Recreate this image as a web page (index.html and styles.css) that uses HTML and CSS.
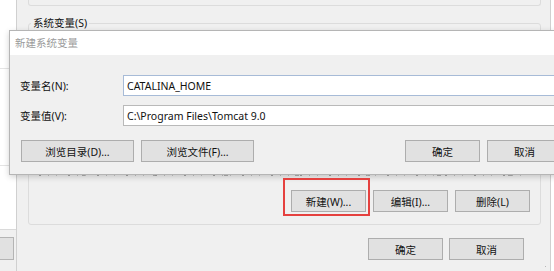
FILE: index.html
```html
<!DOCTYPE html>
<html lang="zh-CN">
<head>
    <meta charset="UTF-8">
    <title>新建系统变量</title>
    <link rel="stylesheet" href="styles.css">
</head>
<body>
<div class="screen">
    <!-- window behind, left edge -->
    <div class="side">
        <div class="side-list">
            <div class="side-row first"></div>
            <div class="side-row second"></div>
        </div>
        <div class="side-foot">
            <div class="side-btn"></div>
        </div>
    </div>

    <!-- environment variables window -->
    <div class="envwin">
        <div class="group-top"></div>
        <fieldset class="group-sys">
            <legend>系统变量(S)</legend>
            <div class="group-inner">
                <!-- list is hidden under the dialog, only the last row's bottom peeks out -->
                <div class="var-list">
                    <div class="var-peek"></div>
                </div>
                <div class="btn-row">
                    <button class="btn">新建(W)...</button>
                    <button class="btn">编辑(I)...</button>
                    <button class="btn">删除(L)</button>
                </div>
            </div>
        </fieldset>
        <div class="btn-row footer">
            <button class="btn">确定</button>
            <button class="btn">取消</button>
        </div>
        <span class="grip"></span>
    </div>
    <div class="edge"></div>

    <!-- new system variable dialog -->
    <div class="dialog">
        <div class="titlebar">新建系统变量</div>
        <div class="dialog-body">
            <div class="field-grid">
                <label for="varName">变量名(N):</label>
                <input id="varName" class="field focused" type="text" value="CATALINA_HOME">
                <label for="varValue">变量值(V):</label>
                <input id="varValue" class="field" type="text" value="C:\Program Files\Tomcat 9.0">
            </div>
            <div class="dialog-btns">
                <button class="btn wide">浏览目录(D)...</button>
                <button class="btn wide">浏览文件(F)...</button>
                <button class="btn push">确定</button>
                <button class="btn">取消</button>
            </div>
        </div>
    </div>

    <!-- red annotation round the new button -->
    <div class="mark"></div>
</div>
</body>
</html>
```

FILE: styles.css
```css
body {
    margin: 0;
    font-family: "Noto Sans", "Noto Sans CJK SC", sans-serif;
    font-size: 10.5px;
    color: #1a1a1a;
}

.screen {
    position: relative;
    width: 554px;
    height: 271px;
    overflow: hidden;
    display: flex;
    background: #fff;
}

/* left strip */
.side {
    width: 16px;
    flex: none;
    display: flex;
    flex-direction: column;
}

.side-list {
    height: 229px;
    background: #fff;
}

.side-row {
    border-bottom: 1px solid #e4e4e4;
}

.side-row.first { height: 68px; }
.side-row.second { height: 96px; }

.side-foot {
    flex: 1;
    background: #f0f0f0;
    border-top: 1px solid #dadada;
    padding-top: 7px;
}

.side-btn {
    width: 14px;
    height: 21px;
    margin-left: -2px;
    background: #e1e1e1;
    border: 1px solid #b4b4b4;
}

/* env window */
.envwin {
    position: relative;
    width: 533px;
    flex: none;
    background: #f0f0f0;
    border-left: 1px solid #d0d0d0;
    border-right: 1px solid #d0d0d0;
}

.edge {
    flex: 1;
    background: #fff;
}

.group-top {
    height: 5px;
    margin: 0 9px 0 11px;
    border: 1px solid #dcdcdc;
    border-top: 0;
    border-radius: 0 0 3px 3px;
}

.group-sys {
    margin: 11px 9px 0 11px;
    padding: 0;
    border: 1px solid #dcdcdc;
    border-radius: 3px;
    min-width: 0;
}

.group-sys legend {
    margin-left: 2px;
    padding: 0 2px;
    line-height: 12px;
    color: #111;
}

.group-inner {
    padding: 0 10px 12px;
}

.var-list {
    height: 148px;
    display: flex;
    align-items: flex-end;
}

.var-peek {
    width: 492px;
    height: 1px;
    margin-bottom: 1px;
    background:
        repeating-linear-gradient(90deg, #a4a4a4 0 2px, transparent 2px 9px, #bdbdbd 9px 10px, transparent 10px 17px, #c4c4c4 17px 18px, transparent 18px 29px),
        repeating-linear-gradient(90deg, transparent 0 43px, #b0b0b0 43px 47px, transparent 47px 71px);
}

.btn-row {
    display: flex;
    justify-content: flex-end;
    gap: 7px;
    margin-top: 13px;
}

.btn {
    width: 75px;
    height: 22px;
    padding: 0;
    background: #e1e1e1;
    border: 1px solid #adadad;
    font-family: inherit;
    font-size: 10.5px;
    color: #111;
}

.footer {
    gap: 6px;
    margin-top: 13px;
    padding-right: 26px;
}

.grip {
    position: absolute;
    right: 2px;
    bottom: 2px;
    width: 7px;
    height: 7px;
    background:
        radial-gradient(circle, #b8b8b8 0.8px, transparent 1px) 0 0 / 3px 3px;
    clip-path: polygon(100% 0, 100% 100%, 0 100%);
}

/* dialog on top */
.dialog {
    position: absolute;
    left: 9px;
    top: 30px;
    width: 565px;
    height: 145px;
    box-sizing: border-box;
    display: flex;
    flex-direction: column;
    background: #f0f0f0;
    border: 1px solid #b5b5b5;
    box-shadow: 0 2px 6px rgba(0, 0, 0, 0.18);
}

.titlebar {
    height: 24px;
    line-height: 25px;
    padding-left: 5px;
    background: #fff;
    color: #9a9a9a;
}

.dialog-body {
    padding: 20px 11px 0 10px;
}

.field-grid {
    display: grid;
    grid-template-columns: 103px 1fr;
    row-gap: 9px;
    align-items: center;
}

.field-grid label {
    color: #111;
}

.field {
    height: 21px;
    box-sizing: border-box;
    margin: 0;
    padding: 0 3px;
    border: 1px solid #b9b9b9;
    background: #fff;
    font-family: inherit;
    font-size: 10.5px;
    color: #111;
    outline: none;
}

.field.focused {
    border-color: #a7bbd7;
}

.dialog-btns {
    display: flex;
    gap: 7px;
    margin-top: 14px;
    padding-left: 1px;
}

.btn.wide {
    width: 113px;
}

.btn.push {
    margin-left: auto;
}

.mark {
    position: absolute;
    left: 283px;
    top: 178px;
    width: 87px;
    height: 38px;
    box-sizing: border-box;
    border: 2px solid #e5413f;
}
```
